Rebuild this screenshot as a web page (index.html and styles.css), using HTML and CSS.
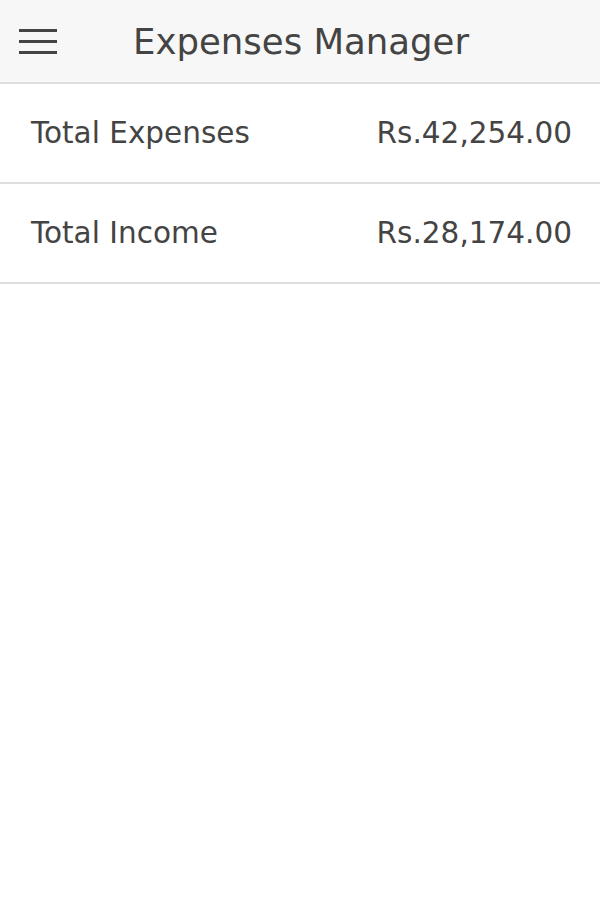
FILE: index.html
```html
<!DOCTYPE html>
<html>
<head>
<meta charset="utf-8">
<link rel="stylesheet" href="styles.css">
</head>
<body>
<header class="toolbar">
  <button class="menu-btn" aria-label="menu">
    <svg width="38" height="28" viewBox="0 0 38 28"><rect x="0" y="2" width="38" height="3" fill="#444"/><rect x="0" y="13" width="38" height="3" fill="#444"/><rect x="0" y="24" width="38" height="3" fill="#444"/></svg>
  </button>
  <h1 class="title">Expenses Manager</h1>
</header>
<main class="list">
  <div class="row"><span class="label">Total Expenses</span><span class="amount">Rs.42,254.00</span></div>
  <div class="row"><span class="label">Total Income</span><span class="amount">Rs.28,174.00</span></div>
</main>
</body>
</html>
```
FILE: styles.css
```css
html, body { margin: 0; padding: 0; background: #fff; }
body { font-family: "DejaVu Sans", sans-serif; color: #444; }
.toolbar {
  height: 82px;
  background: #f7f7f7;
  border-bottom: 2px solid #dedede;
  display: flex;
  align-items: center;
  padding-left: 19px;
}
.menu-btn { background: none; border: 0; padding: 0; margin: 0; width: 38px; height: 28px; display: block; }
.menu-btn svg { display: block; }
.title { margin: 0 0 0 76px; font-weight: normal; font-size: 35.5px; color: #444; }
.row {
  height: 98px;
  border-bottom: 2px solid #dedede;
  display: flex;
  align-items: center;
  justify-content: space-between;
  padding: 0 28px 0 31px;
  font-size: 29.5px;
}
```
